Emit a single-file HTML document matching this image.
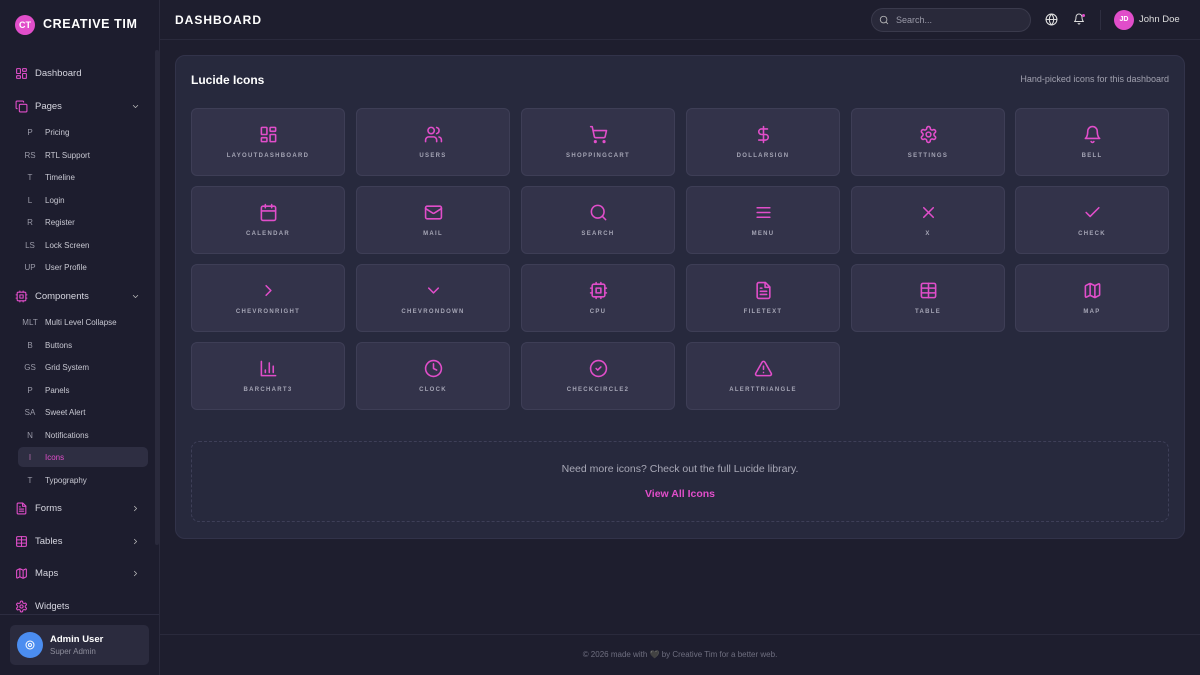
<!DOCTYPE html>
<html><head><meta charset="utf-8"><style>
*{box-sizing:border-box;margin:0;padding:0}
body{width:1200px;height:675px;overflow:hidden;background:#1e1e2e;font-family:"Liberation Sans",sans-serif;position:relative;color:#fff}
.abs{position:absolute}
svg{fill:none;stroke:#e14eca;stroke-width:2;stroke-linecap:round;stroke-linejoin:round}
.side{left:0;top:0;width:160px;height:675px;background:#1d1d2e;border-right:1px solid #2a2a3c}
.nav{position:absolute;left:15px;font-size:9.5px;color:#d6d6e0;display:flex;align-items:center}
.nav svg{width:13px;height:13px;margin-right:7px}
.sub{position:absolute;left:18px;font-size:8px;color:#c8c8d2;display:flex;align-items:center;width:130px;height:20px}
.sub b{font-weight:normal;width:24px;text-align:center;color:#9a9aa8;margin-right:3px}
.chev{position:absolute;left:131px;width:9px;height:9px;stroke:#bbb}
.tile{position:absolute;width:154px;height:68px;background:#33334a;border:1px solid #3e3e56;border-radius:6px}
.tile svg{position:absolute;left:67px;top:16px;width:19px;height:19px}
.tile span{position:absolute;left:0;right:0;top:44px;text-align:center;font-size:6px;letter-spacing:1.3px;color:#a5a5b5;font-weight:bold}
</style></head><body>
<div class="abs side"></div>
<div class="abs" style="left:155px;top:50px;width:4px;height:495px;background:#2a2a3c;border-radius:2px"></div>
<div class="abs" style="left:15px;top:15px;width:20px;height:20px;border-radius:50%;background:#e14eca;font-size:9px;font-weight:bold;text-align:center;line-height:20px">CT</div>
<div class="abs" style="left:43px;top:17px;font-size:12.5px;font-weight:bold;letter-spacing:.6px">CREATIVE TIM</div>

<div class="nav" style="top:67px"><svg viewBox="0 0 24 24"><rect x="3" y="3" width="7" height="9" rx="1"/><rect x="14" y="3" width="7" height="5" rx="1"/><rect x="14" y="12" width="7" height="9" rx="1"/><rect x="3" y="16" width="7" height="5" rx="1"/></svg>Dashboard</div>
<div class="nav" style="top:100px"><svg viewBox="0 0 24 24"><rect x="8" y="8" width="14" height="14" rx="2"/><path d="M4 16c-1.1 0-2-.9-2-2V4c0-1.1.9-2 2-2h10c1.1 0 2 .9 2 2"/></svg>Pages</div>
<svg class="chev" style="top:102px" viewBox="0 0 24 24"><path d="m6 9 6 6 6-6"/></svg>
<div class="sub" style="top:122px"><b>P</b>Pricing</div>
<div class="sub" style="top:145px"><b>RS</b>RTL Support</div>
<div class="sub" style="top:167px"><b>T</b>Timeline</div>
<div class="sub" style="top:190px"><b>L</b>Login</div>
<div class="sub" style="top:212px"><b>R</b>Register</div>
<div class="sub" style="top:235px"><b>LS</b>Lock Screen</div>
<div class="sub" style="top:257px"><b>UP</b>User Profile</div>
<div class="nav" style="top:290px"><svg viewBox="0 0 24 24"><rect x="4" y="4" width="16" height="16" rx="2"/><rect x="9" y="9" width="6" height="6"/><path d="M15 2v2M15 20v2M2 15h2M2 9h2M20 15h2M20 9h2M9 2v2M9 20v2"/></svg>Components</div>
<svg class="chev" style="top:292px" viewBox="0 0 24 24"><path d="m6 9 6 6 6-6"/></svg>
<div class="sub" style="top:312px"><b>MLT</b>Multi Level Collapse</div>
<div class="sub" style="top:335px"><b>B</b>Buttons</div>
<div class="sub" style="top:357px"><b>GS</b>Grid System</div>
<div class="sub" style="top:380px"><b>P</b>Panels</div>
<div class="sub" style="top:402px"><b>SA</b>Sweet Alert</div>
<div class="sub" style="top:425px"><b>N</b>Notifications</div>
<div class="sub" style="top:447px;background:#2e2e42;border-radius:5px;color:#e14eca"><b style="color:#b06aa8">I</b>Icons</div>
<div class="sub" style="top:470px"><b>T</b>Typography</div>
<div class="nav" style="top:502px"><svg viewBox="0 0 24 24"><path d="M14.5 2H6a2 2 0 0 0-2 2v16a2 2 0 0 0 2 2h12a2 2 0 0 0 2-2V7.5L14.5 2z"/><path d="M14 2v6h6M16 13H8M16 17H8M10 9H8"/></svg>Forms</div>
<svg class="chev" style="top:504px" viewBox="0 0 24 24"><path d="m9 18 6-6-6-6"/></svg>
<div class="nav" style="top:535px"><svg viewBox="0 0 24 24"><rect x="3" y="3" width="18" height="18" rx="2"/><path d="M12 3v18M3 9h18M3 15h18"/></svg>Tables</div>
<svg class="chev" style="top:537px" viewBox="0 0 24 24"><path d="m9 18 6-6-6-6"/></svg>
<div class="nav" style="top:567px"><svg viewBox="0 0 24 24"><path d="M14.1 5.55a2 2 0 0 0 1.79 0l3.66-1.83A1 1 0 0 1 21 4.62v12.76a1 1 0 0 1-.55.9l-4.550 2.27a2 2 0 0 1-1.79 0l-4.21-2.1a2 2 0 0 0-1.79 0l-3.66 1.83A1 1 0 0 1 3 19.38V6.62a1 1 0 0 1 .55-.9l4.55-2.27a2 2 0 0 1 1.79 0zM15 5.76v15M9 3.24v15"/></svg>Maps</div>
<svg class="chev" style="top:569px" viewBox="0 0 24 24"><path d="m9 18 6-6-6-6"/></svg>
<div class="nav" style="top:600px"><svg viewBox="0 0 24 24"><path d="M12.22 2h-.44a2 2 0 0 0-2 2v.18a2 2 0 0 1-1 1.73l-.43.25a2 2 0 0 1-2 0l-.15-.08a2 2 0 0 0-2.730.73l-.22.38a2 2 0 0 0 .73 2.73l.15.1a2 2 0 0 1 1 1.72v.51a2 2 0 0 1-1 1.74l-.15.09a2 2 0 0 0-.73 2.73l.22.38a2 2 0 0 0 2.73.73l.15-.08a2 2 0 0 1 2 0l.43.25a2 2 0 0 1 1 1.73V20a2 2 0 0 0 2 2h.44a2 2 0 0 0 2-2v-.18a2 2 0 0 1 1-1.73l.43-.25a2 2 0 0 1 2 0l.15.08a2 2 0 0 0 2.73-.73l.22-.39a2 2 0 0 0-.73-2.73l-.15-.08a2 2 0 0 1-1-1.74v-.5a2 2 0 0 1 1-1.74l.15-.09a2 2 0 0 0 .73-2.73l-.22-.38a2 2 0 0 0-2.73-.73l-.15.08a2 2 0 0 1-2 0l-.43-.25a2 2 0 0 1-1-1.73V4a2 2 0 0 0-2-2z"/><circle cx="12" cy="12" r="3"/></svg>Widgets</div>
<div class="abs" style="left:0;top:614px;width:159px;height:1px;background:#2c2c40"></div>
<div class="abs" style="left:10px;top:625px;width:139px;height:40px;background:#2b2b3e;border-radius:5px"></div>
<div class="abs" style="left:17px;top:632px;width:26px;height:26px;border-radius:50%;background:#4b8df0"><svg viewBox="0 0 24 24" style="position:absolute;left:7px;top:7px;width:12px;height:12px;stroke:#fff"><circle cx="12" cy="12" r="8"/><circle cx="12" cy="12" r="3"/></svg></div>
<div class="abs" style="left:50px;top:634px;font-size:9.5px;font-weight:bold">Admin User</div>
<div class="abs" style="left:50px;top:647px;font-size:8px;color:#8e8e9c">Super Admin</div>

<div class="abs" style="left:160px;top:39px;width:1040px;height:1px;background:#2a2a3c"></div>
<div class="abs" style="left:175px;top:13px;font-size:12px;font-weight:bold;letter-spacing:1px">DASHBOARD</div>
<div class="abs" style="left:871px;top:8px;width:160px;height:24px;border-radius:12px;background:#29293a;border:1px solid #3a3a4c"></div>
<svg class="abs" style="left:879px;top:15px;width:10px;height:10px;stroke:#bbb" viewBox="0 0 24 24"><circle cx="11" cy="11" r="8"/><path d="m21 21-4.3-4.3"/></svg>
<div class="abs" style="left:896px;top:15px;font-size:9px;color:#9a9aa8">Search...</div>
<svg class="abs" style="left:1045px;top:13px;width:13px;height:13px;stroke:#ddd" viewBox="0 0 24 24"><circle cx="12" cy="12" r="10"/><path d="M12 2a14.5 14.5 0 0 0 0 20 14.5 14.5 0 0 0 0-20M2 12h20"/></svg>
<svg class="abs" style="left:1073px;top:13px;width:12px;height:12px;stroke:#ddd" viewBox="0 0 24 24"><path d="M6 8a6 6 0 0 1 12 0c0 7 3 9 3 9H3s3-2 3-9M10.3 21a1.94 1.94 0 0 0 3.4 0"/></svg>
<div class="abs" style="left:1082px;top:14px;width:3px;height:3px;border-radius:50%;background:#e14eca"></div>
<div class="abs" style="left:1100px;top:10px;width:1px;height:20px;background:#2e2e40"></div>
<div class="abs" style="left:1114px;top:10px;width:20px;height:20px;border-radius:50%;background:#e14eca;font-size:7px;font-weight:bold;text-align:center;line-height:20px">JD</div>
<div class="abs" style="left:1139px;top:14px;font-size:9.5px;color:#ddd">John Doe</div>

<div class="abs" style="left:175px;top:55px;width:1010px;height:484px;background:#27293d;border:1px solid #32334a;border-radius:10px"></div>
<div class="abs" style="left:191px;top:73px;font-size:12px;font-weight:bold">Lucide Icons</div>
<div class="abs" style="left:1000px;top:74px;width:169px;text-align:right;font-size:9px;color:#a0a0ae">Hand-picked icons for this dashboard</div>

<div class="tile" style="left:191px;top:108px"><svg viewBox="0 0 24 24"><rect x="3" y="3" width="7" height="9" rx="1"/><rect x="14" y="3" width="7" height="5" rx="1"/><rect x="14" y="12" width="7" height="9" rx="1"/><rect x="3" y="16" width="7" height="5" rx="1"/></svg><span>LAYOUTDASHBOARD</span></div>
<div class="tile" style="left:356px;top:108px"><svg viewBox="0 0 24 24"><path d="M16 21v-2a4 4 0 0 0-4-4H6a4 4 0 0 0-4 4v2"/><circle cx="9" cy="7" r="4"/><path d="M22 21v-2a4 4 0 0 0-3-3.87M16 3.13a4 4 0 0 1 0 7.75"/></svg><span>USERS</span></div>
<div class="tile" style="left:521px;top:108px"><svg viewBox="0 0 24 24"><circle cx="8" cy="21" r="1"/><circle cx="19" cy="21" r="1"/><path d="M2.05 2.05h2l2.66 12.42a2 2 0 0 0 2 1.58h9.78a2 2 0 0 0 1.95-1.57l1.65-7.43H5.12"/></svg><span>SHOPPINGCART</span></div>
<div class="tile" style="left:686px;top:108px"><svg viewBox="0 0 24 24"><path d="M12 2v20M17 5H9.5a3.5 3.5 0 0 0 0 7h5a3.5 3.5 0 0 1 0 7H6"/></svg><span>DOLLARSIGN</span></div>
<div class="tile" style="left:851px;top:108px"><svg viewBox="0 0 24 24"><path d="M12.22 2h-.44a2 2 0 0 0-2 2v.18a2 2 0 0 1-1 1.73l-.43.25a2 2 0 0 1-2 0l-.15-.08a2 2 0 0 0-2.73.73l-.22.38a2 2 0 0 0 .73 2.73l.15.1a2 2 0 0 1 1 1.72v.51a2 2 0 0 1-1 1.74l-.15.09a2 2 0 0 0-.73 2.73l.22.38a2 2 0 0 0 2.73.73l.15-.08a2 2 0 0 1 2 0l.43.25a2 2 0 0 1 1 1.73V20a2 2 0 0 0 2 2h.44a2 2 0 0 0 2-2v-.18a2 2 0 0 1 1-1.73l.43-.25a2 2 0 0 1 2 0l.15.08a2 2 0 0 0 2.73-.73l.22-.39a2 2 0 0 0-.73-2.73l-.15-.08a2 2 0 0 1-1-1.74v-.5a2 2 0 0 1 1-1.74l.15-.09a2 2 0 0 0 .73-2.73l-.22-.38a2 2 0 0 0-2.73-.73l-.15.08a2 2 0 0 1-2 0l-.43-.25a2 2 0 0 1-1-1.73V4a2 2 0 0 0-2-2z"/><circle cx="12" cy="12" r="3"/></svg><span>SETTINGS</span></div>
<div class="tile" style="left:1015px;top:108px"><svg viewBox="0 0 24 24"><path d="M6 8a6 6 0 0 1 12 0c0 7 3 9 3 9H3s3-2 3-9M10.3 21a1.94 1.94 0 0 0 3.4 0"/></svg><span>BELL</span></div>

<div class="tile" style="left:191px;top:186px"><svg viewBox="0 0 24 24"><rect x="3" y="4" width="18" height="18" rx="2"/><path d="M16 2v4M8 2v4M3 10h18"/></svg><span>CALENDAR</span></div>
<div class="tile" style="left:356px;top:186px"><svg viewBox="0 0 24 24"><rect x="2" y="4" width="20" height="16" rx="2"/><path d="m22 7-8.97 5.7a1.94 1.94 0 0 1-2.06 0L2 7"/></svg><span>MAIL</span></div>
<div class="tile" style="left:521px;top:186px"><svg viewBox="0 0 24 24"><circle cx="11" cy="11" r="8"/><path d="m21 21-4.3-4.3"/></svg><span>SEARCH</span></div>
<div class="tile" style="left:686px;top:186px"><svg viewBox="0 0 24 24"><path d="M4 6h16M4 12h16M4 18h16"/></svg><span>MENU</span></div>
<div class="tile" style="left:851px;top:186px"><svg viewBox="0 0 24 24"><path d="M18 6 6 18M6 6l12 12"/></svg><span>X</span></div>
<div class="tile" style="left:1015px;top:186px"><svg viewBox="0 0 24 24"><path d="M20 6 9 17l-5-5"/></svg><span>CHECK</span></div>

<div class="tile" style="left:191px;top:264px"><svg viewBox="0 0 24 24"><path d="m9 18 6-6-6-6"/></svg><span>CHEVRONRIGHT</span></div>
<div class="tile" style="left:356px;top:264px"><svg viewBox="0 0 24 24"><path d="m6 9 6 6 6-6"/></svg><span>CHEVRONDOWN</span></div>
<div class="tile" style="left:521px;top:264px"><svg viewBox="0 0 24 24"><rect x="4" y="4" width="16" height="16" rx="2"/><rect x="9" y="9" width="6" height="6"/><path d="M15 2v2M15 20v2M2 15h2M2 9h2M20 15h2M20 9h2M9 2v2M9 20v2"/></svg><span>CPU</span></div>
<div class="tile" style="left:686px;top:264px"><svg viewBox="0 0 24 24"><path d="M14.5 2H6a2 2 0 0 0-2 2v16a2 2 0 0 0 2 2h12a2 2 0 0 0 2-2V7.5L14.5 2z"/><path d="M14 2v6h6M16 13H8M16 17H8M10 9H8"/></svg><span>FILETEXT</span></div>
<div class="tile" style="left:851px;top:264px"><svg viewBox="0 0 24 24"><rect x="3" y="3" width="18" height="18" rx="2"/><path d="M12 3v18M3 9h18M3 15h18"/></svg><span>TABLE</span></div>
<div class="tile" style="left:1015px;top:264px"><svg viewBox="0 0 24 24"><path d="M14.1 5.55a2 2 0 0 0 1.79 0l3.66-1.83A1 1 0 0 1 21 4.62v12.76a1 1 0 0 1-.55.9l-4.55 2.27a2 2 0 0 1-1.79 0l-4.21-2.1a2 2 0 0 0-1.79 0l-3.66 1.83A1 1 0 0 1 3 19.38V6.62a1 1 0 0 1 .55-.9l4.55-2.27a2 2 0 0 1 1.79 0zM15 5.76v15M9 3.24v15"/></svg><span>MAP</span></div>

<div class="tile" style="left:191px;top:342px"><svg viewBox="0 0 24 24"><path d="M3 3v18h18M18 17V9M13 17V5M8 17v-3"/></svg><span>BARCHART3</span></div>
<div class="tile" style="left:356px;top:342px"><svg viewBox="0 0 24 24"><circle cx="12" cy="12" r="10"/><path d="M12 6v6l4 2"/></svg><span>CLOCK</span></div>
<div class="tile" style="left:521px;top:342px"><svg viewBox="0 0 24 24"><circle cx="12" cy="12" r="10"/><path d="m9 12 2 2 4-4"/></svg><span>CHECKCIRCLE2</span></div>
<div class="tile" style="left:686px;top:342px"><svg viewBox="0 0 24 24"><path d="m21.73 18-8-14a2 2 0 0 0-3.48 0l-8 14A2 2 0 0 0 4 21h16a2 2 0 0 0 1.73-3ZM12 9v4M12 17h.01"/></svg><span>ALERTTRIANGLE</span></div>

<div class="abs" style="left:191px;top:441px;width:978px;height:81px;border:1px dashed #3e3f58;border-radius:8px"></div>
<div class="abs" style="left:191px;top:463px;width:978px;text-align:center;font-size:10.5px;color:#a9a9b7">Need more icons? Check out the full Lucide library.</div>
<div class="abs" style="left:191px;top:488px;width:978px;text-align:center;font-size:10.5px;font-weight:bold;color:#e14eca">View All Icons</div>

<div class="abs" style="left:160px;top:634px;width:1040px;height:1px;background:#2a2a3c"></div>
<div class="abs" style="left:160px;top:650px;width:1040px;text-align:center;font-size:8px;color:#6f6f80">© 2026 made with 🖤 by Creative Tim for a better web.</div>
</body></html>
